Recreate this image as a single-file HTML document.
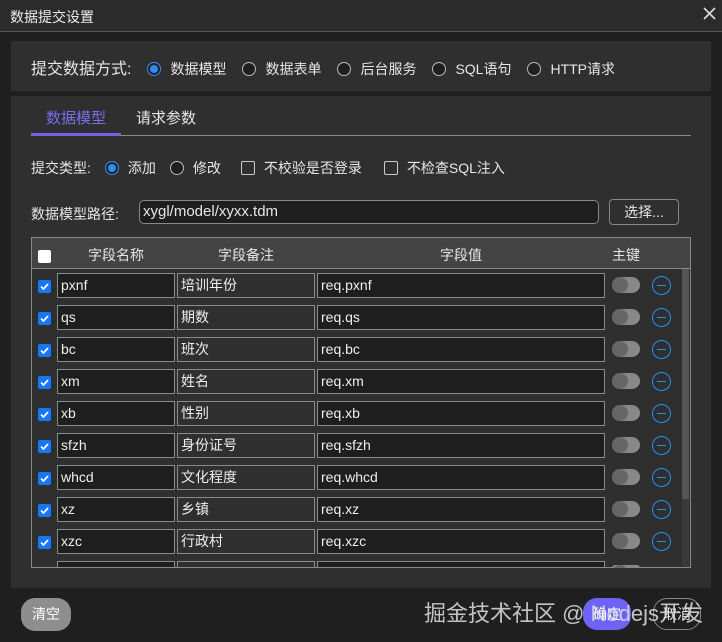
<!DOCTYPE html>
<html><head><meta charset="utf-8"><style>
*{box-sizing:border-box;margin:0;padding:0}
body{width:722px;height:642px;background:#1f1f1f;font-family:"Liberation Sans","Noto Sans CJK SC",sans-serif;color:#e6e6e6;position:relative;overflow:hidden;font-size:14px}
.a{position:absolute}
.title{left:0;top:0;width:722px;height:32px;background:#2b2b2b;border-bottom:1px solid #555}
.radio{display:inline-block;width:14px;height:14px;border:1px solid #bbb;border-radius:50%;vertical-align:-2px;margin-right:9px;background:#1f1f1f}
.radio.on{border-color:#3c8ef0;background:radial-gradient(circle,#2f8cf5 0 3.5px,#1f1f1f 4.5px)}
.cb{display:inline-block;width:14px;height:14px;border:1px solid #ccc;border-radius:2px;vertical-align:-2px;margin-right:9px}
.inp{position:absolute;height:25px;border:1px solid #8a8a8a;background:#1e1e1e;color:#eee;font-size:14px;line-height:23px;padding-left:3px;white-space:nowrap;overflow:hidden}
.chk{position:absolute;left:38px;width:13px;height:13px;background:#1677ff;border-radius:2px}
.tog{position:absolute;left:612px;width:28px;height:16px;border-radius:8px;background:#888;overflow:hidden}
.tog:before{content:"";position:absolute;left:0;top:0;width:16px;height:16px;border-radius:50%;background:#666}
.min{position:absolute;left:652px;width:19px;height:19px;border:1.5px solid #2a8ef0;border-radius:50%}
.min:after{content:"";position:absolute;left:3.5px;top:7.5px;width:9px;height:1.5px;background:#2a8ef0}
.g{display:inline-block;width:14px}
.t .g{width:16px}
</style></head><body>
<div class="a title"></div>
<div class="a" style="left:10px;top:7px;font-size:14px;color:#eee">数据提交设置</div>
<svg class="a" style="left:703px;top:7px" width="13" height="13"><path d="M1 1L12 12M12 1L1 12" stroke="#ddd" stroke-width="1.6"/></svg>
<div class="a" style="left:11px;top:41px;width:700px;height:50px;background:#2f2f2f"></div>
<div class="a t" style="left:31px;top:55px;font-size:14px;white-space:nowrap"><span style="font-size:16px">提交数据方式:</span><span class="g"></span><span class="radio on"></span>数据模型<span class="g"></span><span class="radio"></span>数据表单<span class="g"></span><span class="radio"></span>后台服务<span class="g"></span><span class="radio"></span>SQL语句<span class="g"></span><span class="radio"></span>HTTP请求</div>
<div class="a" style="left:11px;top:96px;width:700px;height:492px;background:#2f2f2f"></div>
<div class="a" style="left:46px;top:107px;font-size:15px;color:#7b6cf0">数据模型</div>
<div class="a" style="left:136px;top:107px;font-size:15px">请求参数</div>
<div class="a" style="left:31px;top:135px;width:660px;height:1px;background:#888"></div>
<div class="a" style="left:31px;top:133px;width:90px;height:3px;background:#7365e8"></div>
<div class="a" style="left:31px;top:158px;white-space:nowrap">提交类型:<span class="g"></span><span class="radio on"></span>添加<span class="g"></span><span class="radio"></span>修改<span class="g" style="width:20px"></span><span class="cb"></span>不校验是否登录<span class="g" style="width:22px"></span><span class="cb"></span>不检查SQL注入</div>
<div class="a" style="left:31px;top:204px">数据模型路径:</div>
<div class="a" style="left:139px;top:200px;width:460px;height:24px;border:1px solid #888;border-radius:5px;background:#1e1e1e;padding-left:3px;font-size:15px;line-height:21px">xygl/model/xyxx.tdm</div>
<div class="a" style="left:609px;top:199px;width:70px;height:26px;border:1px solid #888;border-radius:4px;text-align:center;line-height:24px">选择...</div>
<div class="a" style="left:31px;top:237px;width:660px;height:331px;border:1px solid #888;overflow:hidden">
<div class="a" style="left:0;top:0;width:660px;height:31px;background:#444;border-bottom:1px solid #888"></div>
<div class="a" style="left:650px;top:31px;width:7px;height:300px;background:#3a3a3a"></div>
<div class="a" style="left:650px;top:31px;width:7px;height:230px;background:#555"></div>
</div>
<div class="a" style="left:38px;top:250px;width:13px;height:13px;background:#fff;border-radius:2px"></div>
<div class="a" style="left:88px;top:245px">字段名称</div>
<div class="a" style="left:218px;top:245px">字段备注</div>
<div class="a" style="left:440px;top:245px">字段值</div>
<div class="a" style="left:612px;top:245px">主键</div>
<div id="rows"></div>
<div class="a" style="left:21px;top:598px;width:50px;height:33px;border-radius:14px;background:#8e8e8e;text-align:center;line-height:33px;color:#fff">清空</div>
<div class="a" style="left:583px;top:598px;width:48px;height:32px;border-radius:14px;background:#6e63f5;text-align:center;line-height:32px;color:#fff">确定</div>
<div class="a" style="left:653px;top:598px;width:48px;height:32px;border-radius:14px;border:1px solid #888;text-align:center;line-height:30px">取消</div>
<div class="a" style="left:424px;top:596px;font-size:22px;color:rgba(225,225,225,0.85);white-space:nowrap">掘金技术社区 @ Nodejs开发</div>
<script>
var d=[["pxnf","培训年份"],["qs","期数"],["bc","班次"],["xm","姓名"],["xb","性别"],["sfzh","身份证号"],["whcd","文化程度"],["xz","乡镇"],["xzc","行政村"],["",""]];
var h="";
d.forEach(function(r,i){var y=273+i*32;
if(i<9){h+='<div class="chk" style="top:'+(y+7)+'px"><svg width="13" height="13"><path d="M3 6.5l2.5 2.5 4.5-5" stroke="#fff" stroke-width="1.8" fill="none"/></svg></div>';}
var hh=i==9?'height:6px;border-bottom:none;':'';
h+='<div class="inp" style="left:57px;top:'+y+'px;width:118px;'+hh+'">'+r[0]+'</div>';
h+='<div class="inp" style="left:177px;top:'+y+'px;width:138px;background:#2f2f2f;'+hh+'">'+r[1]+'</div>';
h+='<div class="inp" style="left:317px;top:'+y+'px;width:288px;'+hh+'">'+(r[0]?'req.'+r[0]:'')+'</div>';
if(i<9){h+='<div class="tog" style="top:'+(y+4)+'px"></div><div class="min" style="top:'+(y+3)+'px"></div>';}
else{h+='<div class="tog" style="top:'+(y+4)+'px;height:3px;border-radius:3px 3px 0 0"></div>';}
});
document.getElementById("rows").innerHTML=h;
</script>
</body></html>
